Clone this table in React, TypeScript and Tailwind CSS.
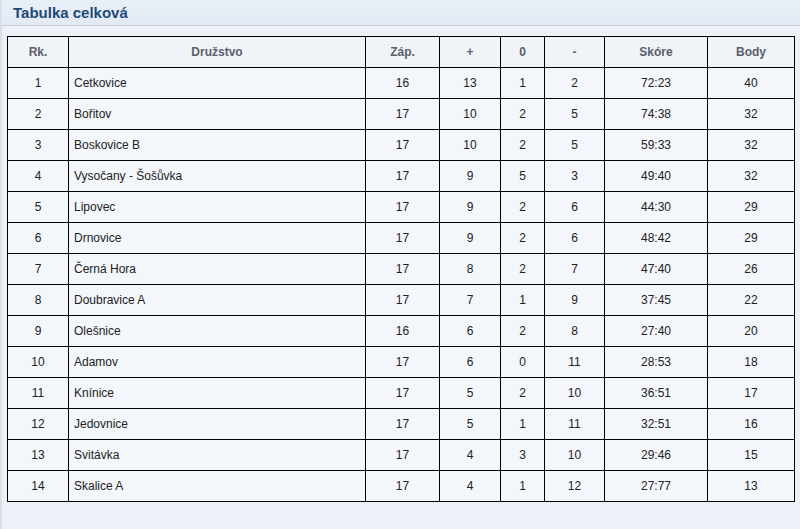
import React from "react";

const rows: [number, string, number, number, number, number, string, number][] = [
  [1, "Cetkovice", 16, 13, 1, 2, "72:23", 40],
  [2, "Bořitov", 17, 10, 2, 5, "74:38", 32],
  [3, "Boskovice B", 17, 10, 2, 5, "59:33", 32],
  [4, "Vysočany - Šošůvka", 17, 9, 5, 3, "49:40", 32],
  [5, "Lipovec", 17, 9, 2, 6, "44:30", 29],
  [6, "Drnovice", 17, 9, 2, 6, "48:42", 29],
  [7, "Černá Hora", 17, 8, 2, 7, "47:40", 26],
  [8, "Doubravice A", 17, 7, 1, 9, "37:45", 22],
  [9, "Olešnice", 16, 6, 2, 8, "27:40", 20],
  [10, "Adamov", 17, 6, 0, 11, "28:53", 18],
  [11, "Knínice", 17, 5, 2, 10, "36:51", 17],
  [12, "Jedovnice", 17, 5, 1, 11, "32:51", 16],
  [13, "Svitávka", 17, 4, 3, 10, "29:46", 15],
  [14, "Skalice A", 17, 4, 1, 12, "27:77", 13],
];

const widths = [61, 297, 74, 61, 44, 60, 103, 87];
const heads = ["Rk.", "Družstvo", "Záp.", "+", "0", "-", "Skóre", "Body"];

export default function App() {
  return (
    <div
      className="w-[800px] h-[529px] bg-[#edf1f7] border-l-2 border-[#d9e0ea] overflow-hidden"
      style={{ fontFamily: '"Liberation Sans", Arial, sans-serif' }}
    >
      <div className="h-[26px] bg-gradient-to-b from-[#e9eff7] to-[#e3eaf4] border-b border-[#c3cfdc] flex items-center pl-[11px]">
        <span className="text-[15px] font-bold text-[#1e4a78] leading-none">Tabulka celková</span>
      </div>
      <div className="pt-[10px] pl-[5px]">
        <table className="border-collapse table-fixed w-[788px] bg-[#f3f6fa]">
          <colgroup>
            {widths.map((w, i) => (
              <col key={i} style={{ width: w }} />
            ))}
          </colgroup>
          <thead>
            <tr className="h-[31px]">
              {heads.map((h, i) => (
                <th
                  key={i}
                  className="border border-black text-[12px] font-bold text-[#5a5f6b] text-center p-0 bg-[#f0f3f8]"
                >
                  {h}
                </th>
              ))}
            </tr>
          </thead>
          <tbody>
            {rows.map((r) => (
              <tr key={r[0]} className="h-[31px]">
                {r.map((c, i) => (
                  <td
                    key={i}
                    className={
                      "border border-black text-[12px] text-[#222] p-0 " +
                      (i === 1 ? "text-left pl-[5px]" : "text-center")
                    }
                  >
                    {c}
                  </td>
                ))}
              </tr>
            ))}
          </tbody>
        </table>
      </div>
    </div>
  );
}
